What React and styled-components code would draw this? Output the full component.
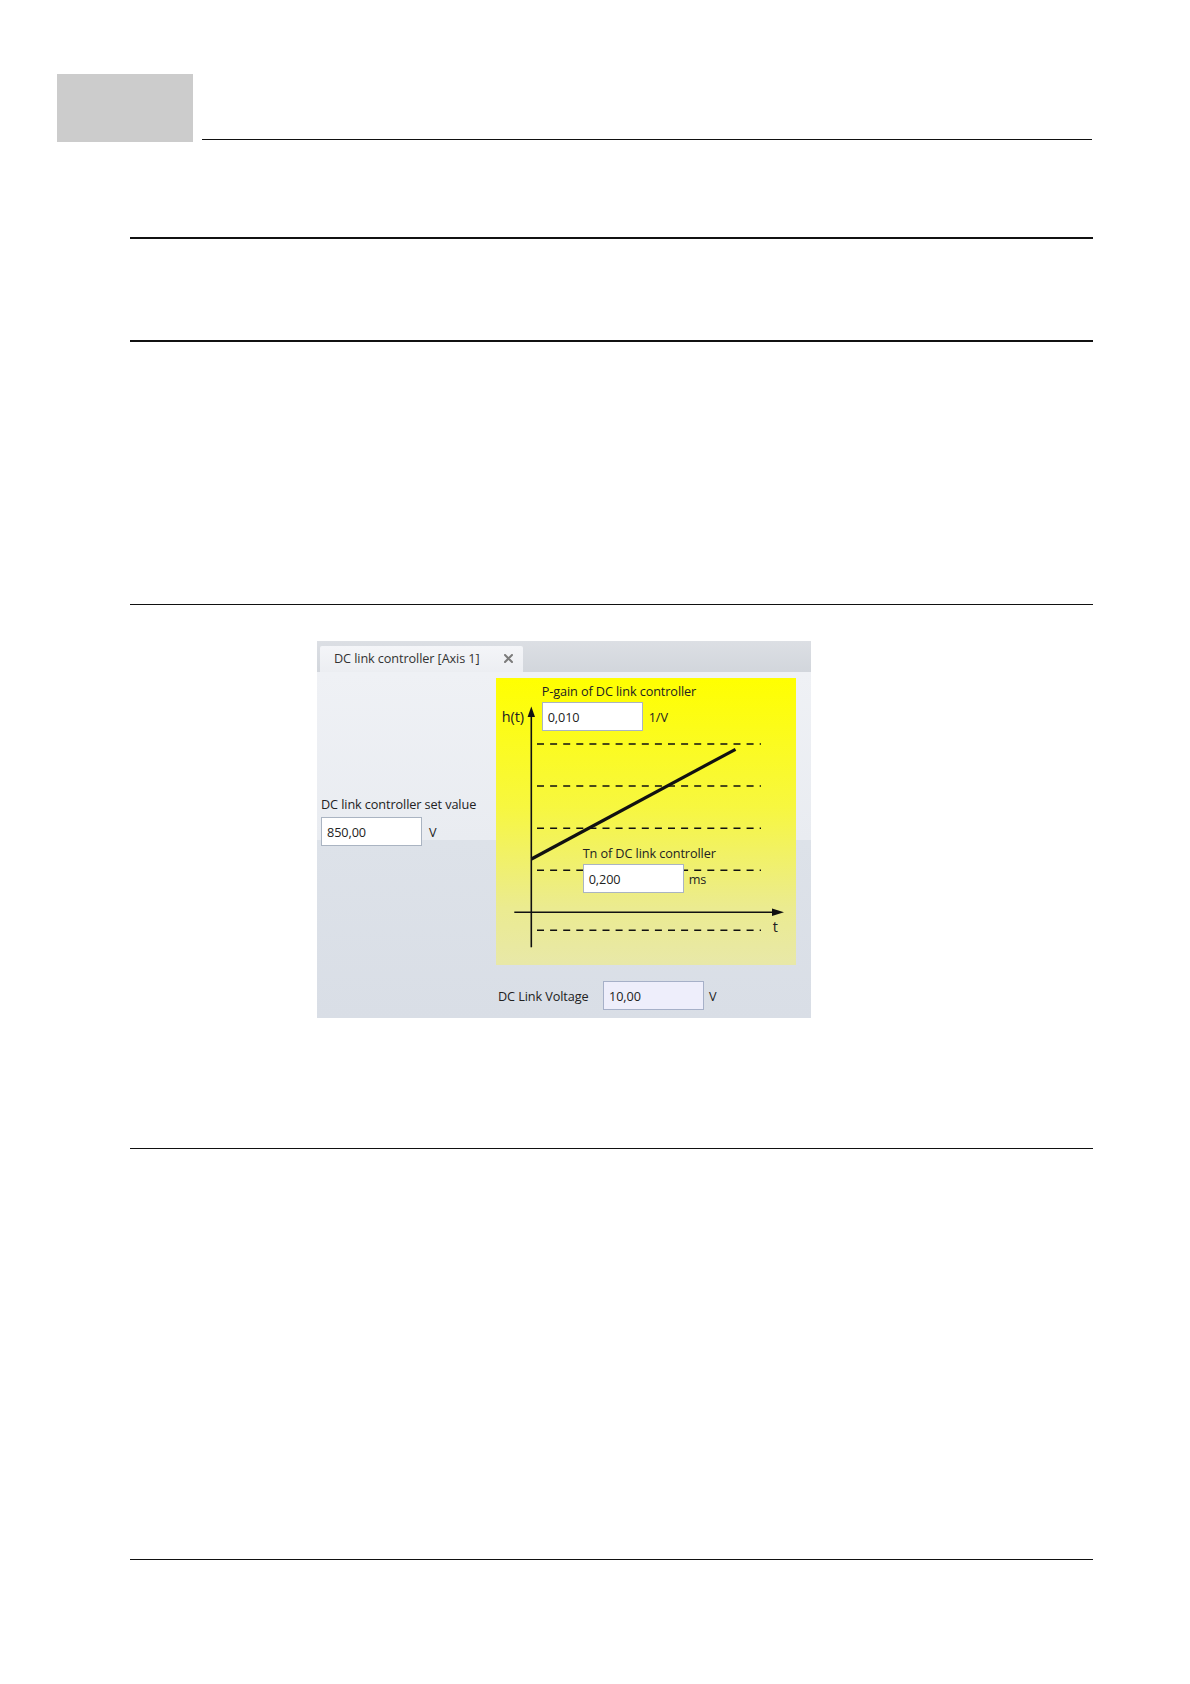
import React from "react";
import styled, { createGlobalStyle } from "styled-components";

const Global = createGlobalStyle`
  html, body { margin: 0; padding: 0; background: #fff; }
  body { font-family: "Open Sans", "Noto Sans", sans-serif; }
  * { box-sizing: border-box; }
`;

const Page = styled.div`
  width: 1190px;
  height: 1684px;
  background: #fff;
  position: relative;
  overflow: hidden;
`;

const Header = styled.div`
  display: flex;
  align-items: flex-end;
  padding: 74px 0 0 57px;
`;

const ChapterBox = styled.div`
  width: 136px;
  height: 68px;
  background: #cccccc;
  flex: none;
`;

const HeaderRule = styled.div`
  width: 890px;
  height: 1.6px;
  background: #111;
  margin: 0 0 1.6px 9px;
`;

const Content = styled.div`
  padding-left: 130px;
  width: 1093px;
`;

const Rule = styled.div`
  height: 1.5px;
  background: #111;
  margin-top: ${(p) => p.$gap}px;
`;

const Panel = styled.div`
  margin: 36.3px 0 0 187px;
  width: 493.7px;
  height: 376.7px;
  display: flex;
  flex-direction: column;
  font-size: 12.7px;
  color: #222;
  letter-spacing: -0.1px;
`;

const TabBar = styled.div`
  height: 30.7px;
  background: linear-gradient(#dcdfe4, #d2d6dc);
  display: flex;
  align-items: flex-end;
  padding-left: 3px;
`;

const Tab = styled.div`
  width: 203px;
  height: 25.7px;
  background: linear-gradient(#f4f5f8, #eceef2);
  border-radius: 2px 2px 0 0;
  display: flex;
  align-items: center;
  padding: 0 0 2px 14px;
  color: #333;
`;

const TabTitle = styled.span`
  flex: 1;
  white-space: nowrap;
`;

const TabClose = styled.svg`
  width: 9px;
  height: 9px;
  margin-right: 10px;
  flex: none;
`;

const Body = styled.div`
  flex: 1;
  display: grid;
  grid-template-columns: 178.7px 300.3px;
  padding-top: 6px;
  background: linear-gradient(
    #eff1f5 0%,
    #e9ecf1 48.5%,
    #dde2e9 48.6%,
    #d9dee6 100%
  );
`;

const LeftCol = styled.div`
  padding: 118px 0 0 4px;
  display: flex;
  flex-direction: column;
  gap: 5px;
`;

const RightCol = styled.div`
  display: flex;
  flex-direction: column;
`;

const Label = styled.div`
  line-height: 16px;
  white-space: nowrap;
`;

const InputRow = styled.div`
  display: flex;
  align-items: center;
  gap: ${(p) => p.$gap ?? 7}px;
`;

const Input = styled.div`
  width: 101px;
  height: 29px;
  border: 1px solid ${(p) => (p.$readonly ? "#a6b0c8" : "#aab4c2")};
  background: ${(p) => (p.$readonly ? "#eeeefb" : "#ffffff")};
  padding-left: 5px;
  display: flex;
  align-items: center;
  flex: none;
`;

const Chart = styled.div`
  position: relative;
  width: 300.3px;
  height: 287.3px;
  background: linear-gradient(#ffff00 0%, #f7f740 45%, #ebeb90 80%, #e8e8a8 100%);
`;

const ChartSvg = styled.svg`
  position: absolute;
  left: 0;
  top: 0;
`;

const Field = styled.div`
  position: absolute;
  left: ${(p) => p.$x}px;
  top: ${(p) => p.$y}px;
  display: flex;
  flex-direction: column;
  gap: 3px;
`;

const AxisLabel = styled.div`
  position: absolute;
  left: ${(p) => p.$x}px;
  top: ${(p) => p.$y}px;
  font-size: 14.5px;
  line-height: 18px;
  color: #222;
`;

const VoltageRow = styled.div`
  display: flex;
  align-items: center;
  margin-top: 16px;
  padding-left: 2.3px;
`;

const VoltageLabel = styled.div`
  width: 105px;
`;

function ChartDrawing() {
  const dashes = [66, 108, 150.3, 192.3, 252.3];
  return (
    <ChartSvg width="300.3" height="287.3" viewBox="0 0 300.3 287.3">
      {dashes.map((y) => (
        <line
          key={y}
          x1="41"
          x2="265"
          y1={y}
          y2={y}
          stroke="#111"
          strokeWidth="1.4"
          strokeDasharray="7 6.1"
        />
      ))}
      <line x1="35.3" y1="36" x2="35.3" y2="269.3" stroke="#111" strokeWidth="1.6" />
      <polygon points="35.3,28.5 31.6,39 39,39" fill="#111" />
      <line x1="18.3" y1="234.3" x2="280" y2="234.3" stroke="#111" strokeWidth="1.6" />
      <polygon points="288,234.3 276,230.6 276,238" fill="#111" />
      <line x1="35.5" y1="181" x2="239.5" y2="71.3" stroke="#111" strokeWidth="3.2" />
    </ChartSvg>
  );
}

export default function App() {
  return (
    <Page>
      <Global />
      <Header>
        <ChapterBox />
        <HeaderRule />
      </Header>
      <Content>
        <Rule $gap={95} />
        <Rule $gap={101.5} />
        <Rule $gap={262.2} />
        <Panel>
          <TabBar>
            <Tab>
              <TabTitle>DC link controller [Axis 1]</TabTitle>
              <TabClose viewBox="0 0 9 9" aria-label="close">
                <path d="M1 1 L8 8 M8 1 L1 8" stroke="#7b7b7b" strokeWidth="2" strokeLinecap="round" />
              </TabClose>
            </Tab>
          </TabBar>
          <Body>
            <LeftCol>
              <Label>DC link controller set value</Label>
              <InputRow>
                <Input>850,00</Input>
                <span>V</span>
              </InputRow>
            </LeftCol>
            <RightCol>
              <Chart>
                <ChartDrawing />
                <AxisLabel $x={6} $y={30}>h(t)</AxisLabel>
                <AxisLabel $x={277} $y={240}>t</AxisLabel>
                <Field $x={46} $y={5}>
                  <Label>P-gain of DC link controller</Label>
                  <InputRow $gap={6}>
                    <Input>0,010</Input>
                    <span>1/V</span>
                  </InputRow>
                </Field>
                <Field $x={87} $y={167}>
                  <Label>Tn of DC link controller</Label>
                  <InputRow $gap={5}>
                    <Input>0,200</Input>
                    <span>ms</span>
                  </InputRow>
                </Field>
              </Chart>
              <VoltageRow>
                <VoltageLabel>DC Link Voltage</VoltageLabel>
                <InputRow $gap={5}>
                  <Input $readonly>10,00</Input>
                  <span>V</span>
                </InputRow>
              </VoltageRow>
            </RightCol>
          </Body>
        </Panel>
        <Rule $gap={129.8} />
        <Rule $gap={409.5} />
      </Content>
    </Page>
  );
}
